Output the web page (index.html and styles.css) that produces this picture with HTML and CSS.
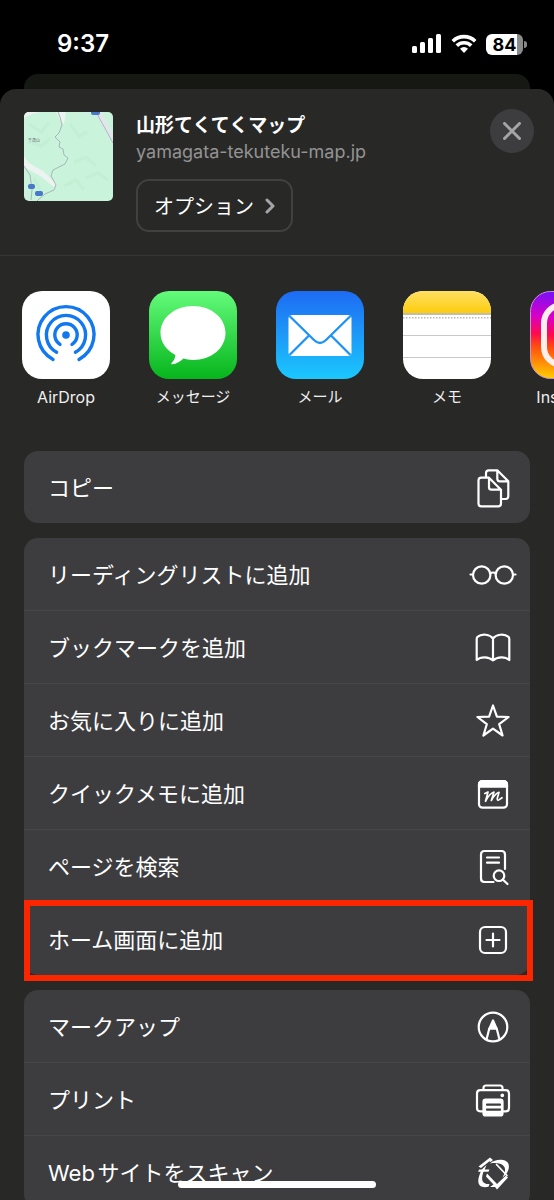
FILE: index.html
```
<!DOCTYPE html>
<html lang="ja">
<head>
  <meta charset="UTF-8">
  <meta name="viewport" content="width=device-width, initial-scale=1">
  <title>山形てくてくマップ</title>
  <link rel="stylesheet" href="styles.css">
</head>
<body>
  <div class="screen">
    <div class="status">
      <span class="time">9:37</span>
      <div class="status-icons">
        <svg width="30" height="20" viewBox="0 0 30 20" fill="#fff">
          <rect x="0" y="12" width="5" height="7" rx="1.5"/>
          <rect x="8" y="8" width="5" height="11" rx="1.5"/>
          <rect x="16" y="4" width="5" height="15" rx="1.5"/>
          <rect x="24" y="0" width="5" height="19" rx="1.5"/>
        </svg>
        <svg width="26" height="20" viewBox="0 0 26 20" fill="none" stroke="#fff" stroke-width="3.6">
          <path d="M1.8 7.2a16 16 0 0 1 22.4 0"/>
          <path d="M5.8 11.6a10.400 10.400 0 0 1 14.400 0"/>
          <path d="M13 19l-4-4.300a5.800 5.800 0 0 1 8 0z" fill="#fff" stroke="none"/>
        </svg>
        <div class="battery"><span>84</span></div>
      </div>
    </div>

    <div class="back-card"></div>

    <div class="sheet">
      <div class="header">
        <svg class="thumb" viewBox="0 0 89 89">
          <rect width="89" height="89" fill="#c9f3da"/>
          <path d="M5 12l12 8 8-9M4 30l13 4 9-7M46 12l9 12 8-4M50 50l12-5 10 9M62 66l12-5 10 7M40 74l12-6 8 10M10 66l6 12" fill="none" stroke="#c3efd5" stroke-width="3"/>
          <path d="M0 0h16l-8 2-8 4zM0 44l5 7 14 8 14 13-3 3-14-11-16-9zM32 0h10l-2 12-3-2z" fill="#edf3f0"/>
          <path d="M70 0h8l11 22v10z" fill="#dfe7e8"/>
          <path d="M72 0l17 31" fill="none" stroke="#aab8c8" stroke-width="1"/>
          <path d="M34 0l2 5 2 8-3 8-4 4 5 5-1 5 4 2 1 6 4 3-3 6-6 3-6 3-2 6 5 9-2 5-9 4-7 6-4 4M0 54l6 9 2 15-1 10" fill="none" stroke="#a5b7b8" stroke-width="1"/>
          <text x="4" y="30" class="place">千歳山</text>
          <rect x="67" y="-2" width="9" height="5" rx="2" fill="#4779c8"/>
          <rect x="4" y="72" width="7" height="5" rx="2" fill="#4779c8"/>
          <rect x="11" y="79" width="8" height="5" rx="2" fill="#4779c8"/>
        </svg>
        <div class="info">
          <h1>山形てくてくマップ</h1>
          <p>yamagata-tekuteku-map.jp</p>
          <button class="options">オプション
            <svg width="10" height="16" viewBox="0 0 10 16"><path d="M2 2l6 6-6 6"/></svg>
          </button>
        </div>
        <button class="close" aria-label="閉じる">
          <svg width="18" height="18" viewBox="0 0 18 18"><path d="M1.500 1.500l15 15M16.500 1.500l-15 15"/></svg>
        </button>
      </div>

      <div class="apps">
        <button class="app">
          <svg viewBox="0 0 88 88">
            <rect width="88" height="88" rx="20" fill="#fff"/>
            <g fill="none" stroke="#1278f0" stroke-width="3.400" stroke-linecap="round">
              <path d="M31 68.400a28 28 0 1 1 26 0"/>
              <path d="M34.600 61.200a19.600 19.600 0 1 1 18.800 0"/>
              <path d="M38 53.400a11.200 11.200 0 1 1 12 0"/>
            </g>
            <circle cx="44" cy="44" r="3.800" fill="#1278f0"/>
          </svg>
          <span lang="en">AirDrop</span>
        </button>
        <button class="app">
          <svg viewBox="0 0 88 88">
            <defs><linearGradient id="green" x2="0" y2="1"><stop stop-color="#64fb7b"/><stop offset="1" stop-color="#06b51c"/></linearGradient></defs>
            <rect width="88" height="88" rx="20" fill="url(#green)"/>
            <path d="M44 15c18.500 0 32.500 12 32.500 27S62.500 69 44 69c-4 0-7-.5-9.500-1.400C31 71 27 73 23.300 73.300c-1.200 0-1.200-1-.4-1.800 2-2 3.300-4.500 3.500-7.500C17 59 11.500 51 11.500 42c0-15 14-27 32.500-27z" fill="#fff"/>
          </svg>
          <span>メッセージ</span>
        </button>
        <button class="app">
          <svg viewBox="0 0 88 88">
            <defs><linearGradient id="blue" x2="0" y2="1"><stop stop-color="#1e6bf3"/><stop offset="1" stop-color="#1bc8fd"/></linearGradient></defs>
            <rect width="88" height="88" rx="20" fill="url(#blue)"/>
            <rect x="12.500" y="24" width="63" height="41" rx="3.500" fill="#fff"/>
            <path d="M13.500 25l24.500 24c4 4 8 4 12 0l24.500-24M13.500 64L33 44.500M74.500 64L55 44.500" fill="none" stroke="#1d93f7" stroke-width="2.300"/>
          </svg>
          <span>メール</span>
        </button>
        <button class="app">
          <svg viewBox="0 0 88 88">
            <defs>
              <linearGradient id="yellow" x2="0" y2="1"><stop stop-color="#fee063"/><stop offset="1" stop-color="#fdcc0e"/></linearGradient>
              <clipPath id="tile"><rect width="88" height="88" rx="20"/></clipPath>
            </defs>
            <g clip-path="url(#tile)">
              <rect width="88" height="88" fill="#fff"/>
              <rect width="88" height="22" fill="url(#yellow)"/>
              <path d="M0 23h88" stroke="#c4bda9" stroke-width="2"/>
              <path d="M0 26.800h88" stroke="#b9b9b9" stroke-width="1.500" stroke-dasharray="1.500 1.500"/>
              <path d="M0 44.500h88M0 66.500h88" stroke="#c8c8c8" stroke-width="1"/>
            </g>
          </svg>
          <span>メモ</span>
        </button>
        <button class="app">
          <svg viewBox="0 0 88 88">
            <defs><linearGradient id="insta" x1="0.100" x2="0" y2="1"><stop stop-color="#7a0ff5"/><stop offset=".28" stop-color="#d800c8"/><stop offset=".48" stop-color="#ff0a50"/><stop offset=".62" stop-color="#ff4a10"/><stop offset="1" stop-color="#ffd500"/></linearGradient></defs>
            <rect x=".5" y=".5" width="87" height="87" rx="20" fill="url(#insta)" stroke="#c98fd8"/>
            <rect x="14" y="14" width="60" height="60" rx="18" fill="none" stroke="#ffeeea" stroke-width="6"/>
            <circle cx="44" cy="44" r="14" fill="none" stroke="#ffeeea" stroke-width="6"/>
          </svg>
          <span lang="en">Instagram</span>
        </button>
      </div>

      <ul class="actions">
        <li><button>コピー
          <svg viewBox="0 0 48 48"><path d="M17 13.700V9q0-2.700 2.700-2.700h8.600l11 11v15q0 2.700-2.700 2.700h-4.300M28.300 6.500v8.300q0 2.500 2.500 2.500h8.200M12.300 13.700H20l12 12v13.800q0 2.800-2.800 2.800H12.300q-2.800 0-2.800-2.800V16.500q0-2.800 2.800-2.800zM20 14v9.200q0 2.500 2.500 2.500h9.200"/></svg>
        </button></li>
      </ul>

      <ul class="actions">
        <li><button>リーディングリストに追加
          <svg viewBox="0 0 48 48"><circle cx="12.700" cy="24" r="8.700"/><circle cx="35.300" cy="24" r="8.700"/><path d="M21 22.500q3-2 6 0M1.500 23.500H4M44 23.500h2.500"/></svg>
        </button></li>
        <li><button>ブックマークを追加
          <svg viewBox="0 0 48 48"><path d="M24 14.500c-3-4-11-5.400-15.500-1.600-.6.500-.8 1-.8 2V36c4-3.600 12-3.600 16.300.4 4.300-4 12.300-4 16.300-.4V14.900c0-1-.2-1.500-.8-2-4.500-3.800-12.500-2.400-15.500 1.600zv22"/></svg>
        </button></li>
        <li><button>お気に入りに追加
          <svg viewBox="0 0 48 48"><path d="M24 8.500l3.900 11.200 11.700.3-9.400 7.200 3.400 11.300L24 31.700l-9.600 6.800 3.400-11.300L8.400 20l11.700-.3z"/></svg>
        </button></li>
        <li><button>クイックメモに追加
          <svg viewBox="0 0 48 48"><rect x="10" y="11.200" width="28" height="26.500" rx="3.500"/><path class="solid" d="M10 16.700V14.700q0-3.500 3.500-3.500h21q3.500 0 3.500 3.500v2z"/><path class="thin" d="M15.800 23.500l3.200-1.500-2.500 9.300c2.500-5 5-8.300 8.500-9.300l-2.700 8.500c2.500-4.500 5-7.500 7.700-8.200l-1.700 5.900c-.4 1.800.6 2.300 2 1.400l2.700-1.900"/></svg>
        </button></li>
        <li><button>ページを検索
          <svg viewBox="0 0 48 48"><path d="M24.500 39H15.500q-3.500 0-3.500-3.500V11.500q0-3.500 3.500-3.500h17q3.500 0 3.500 3.500V26M18 14.500h12M18 19.700h12M34 36.700l4.500 4.300"/><circle cx="30" cy="32.700" r="5.300"/></svg>
        </button></li>
        <li class="marked"><button>ホーム画面に追加
          <svg viewBox="0 0 48 48"><rect x="11" y="11" width="26" height="26" rx="5"/><path d="M24 17.500v13M17.500 24h13"/></svg>
        </button></li>
      </ul>

      <ul class="actions">
        <li><button>マークアップ
          <svg viewBox="0 0 48 48"><circle cx="24" cy="24" r="14.300"/><path d="M17.500 36.500l2.800-11h7.400l2.800 11"/><path class="solid" d="M24 17.500l-3.500 8h7z"/></svg>
        </button></li>
        <li><button>プリント
          <svg viewBox="0 0 48 48"><path d="M14.500 14v-2q0-2.500 2.500-2.500h14q2.500 0 2.500 2.500v2M13.500 35.300h-2.200q-3.300 0-3.300-3.300V17.500q0-3.300 3.300-3.300h25.400q3.300 0 3.300 3.300V32q0 3.300-3.300 3.300h-2.200"/><rect class="solid" x="14.500" y="23.500" width="19" height="16" rx="2"/><path class="cut" d="M18 28.700h13M18 33.700h13"/><circle class="solid" cx="33.300" cy="19.300" r=".8"/></svg>
        </button></li>
        <li><button>Webサイトをスキャン
          <svg viewBox="0 0 48 48"><path class="fill" d="M9.500 17.500L21 8.500l3 2.500-2.500 2-1-.8-8.500 6.800z"/><path class="fill" d="M21 14.500c5.500-5 16.500-5 18.500.5 1.500 5-1.500 10.500-6 13.500 2.500-4.500 3.500-8.500 1.500-11-2.500-3.500-8.500-4-14-3z"/><path class="fill" d="M17.500 16l-1.800 4.500h4.800l-1 2.300h-5c-1.800 5-2 9 .5 11 1.500 1.300 3.500 1.500 5.500 1.200l-1 2.700c-5.500 1.300-10-.2-10.200-5.200-.1-3 1-6.500 2.400-9.700H9l1.200-2.300h2.600z"/><path class="fill" d="M18 24.500l10 10.500 9-8.500 2 2L28 40.500l-2-2.500h-5l3.500-2.500L17 27.500z"/><path class="thin" d="M27.500 15.500L38 26.500"/></svg>
        </button></li>
      </ul>
    </div>

    <div class="home-bar"></div>
  </div>
</body>
</html>
```
FILE: styles.css
```
* {
  box-sizing: border-box;
}
body {
  margin: 0;
  background: #000;
  color: #fff;
  font-family: Inter, "Noto Sans CJK JP", sans-serif;
}
button {
  border: none;
  background: none;
  color: inherit;
  font-family: inherit;
  cursor: pointer;
}
.screen {
  position: relative;
  height: 100vh;
  overflow: hidden;
  display: flex;
  flex-direction: column;
}

/* status bar */
.status {
  flex: none;
  height: 74px;
  padding: 28px 31px 0 57px;
  display: flex;
  justify-content: space-between;
  align-items: flex-start;
}
.time {
  font-size: 24px;
  line-height: 32px;
  font-weight: 600;
}
.status-icons {
  height: 32px;
  display: flex;
  align-items: center;
  gap: 9px;
}
.battery {
  position: relative;
  width: 37px;
  height: 21px;
  border-radius: 6px;
  background: linear-gradient(to right, #fff 84%, #8b8b8b 84%);
  color: #000;
  font-size: 18px;
  line-height: 21px;
  font-weight: 700;
  text-align: center;
}
.battery::after {
  content: "";
  position: absolute;
  right: -4px;
  top: 7px;
  width: 3px;
  height: 7px;
  border-radius: 0 3px 3px 0;
  background: #8b8b8b;
}

.back-card {
  flex: none;
  height: 15px;
  margin: 0 24px;
  border-radius: 14px 14px 0 0;
  background: #151813;
}
.sheet {
  flex: 1 0 auto;
  border-radius: 16px 16px 0 0;
  background: #282827;
}

/* page info */
.header {
  display: flex;
  align-items: flex-start;
  height: 167px;
  padding: 20px 20px 0 24px;
  border-bottom: 1px solid #363636;
}
.thumb {
  flex: none;
  width: 89px;
  height: 89px;
  margin-top: 3px;
  border-radius: 5px;
}
.place {
  font-size: 4px;
  fill: #666;
}
.info {
  flex: 1;
  margin-left: 23px;
}
h1 {
  margin: 0;
  font-size: 19px;
  line-height: 34px;
  font-weight: 700;
}
.info p {
  margin: 0 0 18px;
  color: #939393;
  font-size: 18px;
  line-height: 18px;
}
.options {
  display: flex;
  align-items: center;
  gap: 11px;
  height: 53px;
  padding: 0 16px;
  border: 2px solid #414141;
  border-radius: 13px;
  font-size: 20px;
}
.options svg,
.close svg {
  fill: none;
  stroke: #a5a5a9;
  stroke-width: 3;
  stroke-linecap: round;
  stroke-linejoin: round;
}
.close {
  flex: none;
  display: flex;
  align-items: center;
  justify-content: center;
  width: 44px;
  height: 44px;
  padding: 0;
  border-radius: 50%;
  background: #3d3d3f;
}

/* app row */
.apps {
  display: flex;
  gap: 39px;
  height: 195px;
  padding: 35px 0 0 22px;
  overflow: hidden;
}
.app {
  flex: none;
  width: 88px;
  padding: 0;
  display: flex;
  flex-direction: column;
  align-items: center;
  gap: 6px;
}
.app svg {
  width: 88px;
  height: 88px;
}
.app span {
  font-size: 15px;
  line-height: 24px;
  color: #f0f0f0;
}
.app span:lang(en) {
  font-size: 16px;
}

/* action list */
.actions {
  list-style: none;
  margin: 0 24px 15px;
  padding: 0;
  border-radius: 14px;
  background: #3d3d3f;
}
.actions li {
  position: relative;
}
.actions li + li {
  border-top: 1px solid #464648;
}
.actions button {
  width: 100%;
  height: 72px;
  padding: 0 13px 3px 24px;
  display: flex;
  align-items: center;
  justify-content: space-between;
  font-size: 22px;
  text-align: left;
  text-autospace: normal;
}
.actions svg {
  width: 48px;
  height: 48px;
  margin-top: 5px;
  fill: none;
  stroke: #fff;
  stroke-width: 2.2;
  stroke-linecap: round;
  stroke-linejoin: round;
}
.actions .thin {
  stroke-width: 1.7;
}
.actions .solid {
  fill: #fff;
}
.actions .fill {
  fill: #fff;
  stroke: none;
}
.actions .cut {
  stroke: #3d3d3f;
}
.marked::after {
  content: "";
  position: absolute;
  inset: -3px -3px -6px 0;
  border: 6px solid #fb2600;
  pointer-events: none;
}

.home-bar {
  position: absolute;
  left: 50%;
  bottom: 12px;
  width: 198px;
  height: 7px;
  margin-left: -99px;
  border-radius: 4px;
  background: #fff;
}
```
